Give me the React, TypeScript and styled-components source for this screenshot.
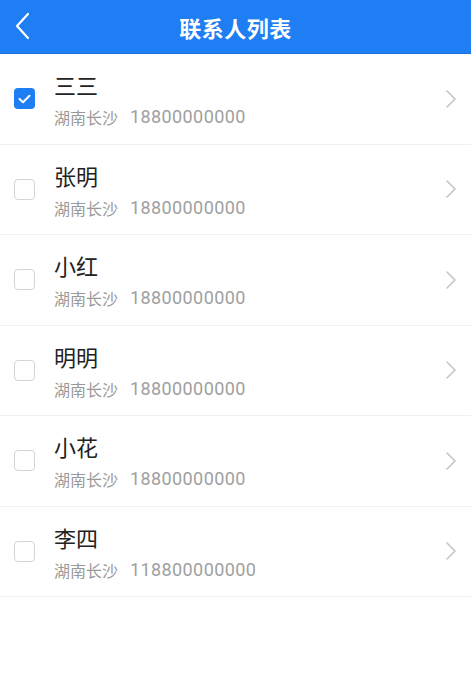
import * as React from 'react';
import styled, { createGlobalStyle } from 'styled-components';

const GlobalStyle = createGlobalStyle`
  html, body {
    margin: 0;
    padding: 0;
    background: #ffffff;
    font-family: "Noto Sans CJK SC", "Noto Sans", Roboto, sans-serif;
  }
`;

interface Contact {
  id: number;
  name: string;
  city: string;
  phone: string;
  checked: boolean;
}

const contacts: Contact[] = [
  { id: 1, name: '三三', city: '湖南长沙', phone: '18800000000', checked: true },
  { id: 2, name: '张明', city: '湖南长沙', phone: '18800000000', checked: false },
  { id: 3, name: '小红', city: '湖南长沙', phone: '18800000000', checked: false },
  { id: 4, name: '明明', city: '湖南长沙', phone: '18800000000', checked: false },
  { id: 5, name: '小花', city: '湖南长沙', phone: '18800000000', checked: false },
  { id: 6, name: '李四', city: '湖南长沙', phone: '118800000000', checked: false },
];

const Page = styled.div`
  width: 471px;
  min-height: 688px;
  background: #fff;
`;

const Header = styled.header`
  height: 54px;
  background: #1f7ef3;
  border-bottom: 1px solid #1a6fd9;
  box-sizing: border-box;
  display: flex;
  align-items: center;
  justify-content: center;
  position: relative;
`;

const BackButton = styled.button`
  position: absolute;
  left: 12px;
  top: 12px;
  width: 20px;
  height: 28px;
  border: 0;
  background: transparent;
  padding: 0;
  display: flex;
  align-items: center;
  justify-content: center;
`;

const Title = styled.h1`
  margin: 0;
  color: #fff;
  font-size: 22px;
  font-weight: 700;
  letter-spacing: 0.5px;
`;

const List = styled.ul`
  list-style: none;
  margin: 0;
  padding: 0;
`;

const Row = styled.li`
  height: 90.5px;
  display: flex;
  align-items: center;
  border-bottom: 1px solid #f0f0f0;
  padding: 0 14px;
  box-sizing: border-box;
`;

const Check = styled.span<{ $checked: boolean }>`
  width: 21px;
  height: 21px;
  border-radius: 4px;
  box-sizing: border-box;
  border: ${(p) => (p.$checked ? 'none' : '1.5px solid #d4d4d4')};
  background: ${(p) => (p.$checked ? '#1f7ef3' : '#fff')};
  display: flex;
  align-items: center;
  justify-content: center;
  flex-shrink: 0;
`;

const Info = styled.div`
  flex: 1;
  margin-left: 19px;
  display: flex;
  flex-direction: column;
`;

const Name = styled.div`
  font-size: 22px;
  color: #222;
  line-height: 30px;
`;

const Sub = styled.div`
  font-size: 16px;
  color: #999;
  line-height: 22px;
  margin-top: 7px;
  display: flex;
  align-items: center;
  gap: 12px;
`;

const Phone = styled.span`
  font-family: Roboto, "Noto Sans", sans-serif;
  font-size: 18px;
  letter-spacing: 0.4px;
  color: #a0a0a0;
`;

const Chevron = () => (
  <svg width="12" height="20" viewBox="0 0 12 20">
    <path d="M2 2 L10 10 L2 18" fill="none" stroke="#c4c4c4" strokeWidth="1.6" strokeLinecap="round" strokeLinejoin="round" />
  </svg>
);

export default function App() {
  return (
    <Page>
      <GlobalStyle />
      <Header>
        <BackButton>
          <svg width="16" height="28" viewBox="0 0 16 28">
            <path d="M14 2 L3 14 L14 26" fill="none" stroke="#fff" strokeWidth="2.2" strokeLinecap="round" strokeLinejoin="round" />
          </svg>
        </BackButton>
        <Title>联系人列表</Title>
      </Header>
      <List>
        {contacts.map((c) => (
          <Row key={c.id}>
            <Check $checked={c.checked}>
              {c.checked && (
                <svg width="13" height="10" viewBox="0 0 13 10">
                  <path d="M1.5 5 L5 8.3 L11.5 1.8" fill="none" stroke="#fff" strokeWidth="2" strokeLinecap="round" strokeLinejoin="round" />
                </svg>
              )}
            </Check>
            <Info>
              <Name>{c.name}</Name>
              <Sub>
                <span>{c.city}</span>
                <Phone>{c.phone}</Phone>
              </Sub>
            </Info>
            <Chevron />
          </Row>
        ))}
      </List>
    </Page>
  );
}
